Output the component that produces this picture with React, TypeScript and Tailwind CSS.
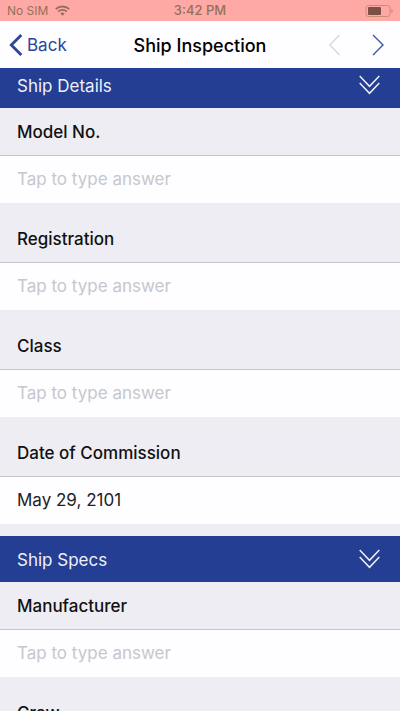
import { useState } from "react";

type Question = {
  id: string;
  label: string;
  value?: string;
};

type Section = {
  title: string;
  questions: Question[];
};

const sections: Section[] = [
  {
    title: "Ship Details",
    questions: [
      { id: "model", label: "Model No." },
      { id: "registration", label: "Registration" },
      { id: "class", label: "Class" },
      { id: "commission", label: "Date of Commission", value: "May 29, 2101" },
    ],
  },
  {
    title: "Ship Specs",
    questions: [
      { id: "manufacturer", label: "Manufacturer" },
      { id: "crew", label: "Crew" },
    ],
  },
];

function StatusBar() {
  return (
    <div className="grid h-[21px] shrink-0 grid-cols-[1fr_auto_1fr] items-center bg-[#ffa9a6] px-[7px] text-xs text-[#94705a]">
      <div className="flex items-center gap-[7px]">
        <span>No SIM</span>
        <svg width="15" height="11" viewBox="0 0 15 11" fill="none" aria-hidden="true">
          <path d="M.8 4.1a9.6 9.6 0 0 1 13.4 0" stroke="currentColor" strokeWidth="2" />
          <path d="M3.2 6.7a6.2 6.2 0 0 1 8.6 0" stroke="currentColor" strokeWidth="1.8" />
          <path d="M7.5 10.8 5.3 8.5a3.2 3.2 0 0 1 4.4 0z" fill="currentColor" />
        </svg>
      </div>
      <span className="text-[13px] font-medium">3:42 PM</span>
      <svg
        className="justify-self-end"
        width="28"
        height="12"
        viewBox="0 0 28 12"
        fill="none"
        aria-hidden="true"
      >
        <rect x="1" y=".5" width="24" height="11" rx="2.5" stroke="#c98f74" />
        <rect x="3" y="2" width="13" height="8" rx="1" fill="#7d5046" />
        <path d="M26.3 4v4c1-.4 1.4-1 1.4-2s-.4-1.6-1.4-2z" fill="#c98f74" />
      </svg>
    </div>
  );
}

function NavBar() {
  return (
    <header className="grid h-[47px] shrink-0 grid-cols-[1fr_auto_1fr] items-center bg-[#fefdff] px-2">
      <button type="button" className="flex items-center gap-1 text-[17px] text-[#2b459a]">
        <svg width="15" height="22" viewBox="0 0 15 22" fill="none" aria-hidden="true">
          <path d="M13.3 1 3.3 11l10 10" stroke="currentColor" strokeWidth="2.8" />
        </svg>
        <span className="pt-0.5">Back</span>
      </button>
      <h1 className="pt-0.5 text-lg font-medium text-black">Ship Inspection</h1>
      <div className="flex items-center justify-end gap-8 pr-2">
        <button type="button" aria-label="Previous" disabled className="text-[#d3d5dc]">
          <svg width="11" height="22" viewBox="0 0 11 22" fill="none" aria-hidden="true">
            <path d="M10.5 1 .8 11l9.7 10" stroke="currentColor" strokeWidth="1.2" />
          </svg>
        </button>
        <button type="button" aria-label="Next" className="text-[#3c55a5]">
          <svg width="12" height="22" viewBox="0 0 12 22" fill="none" aria-hidden="true">
            <path d="M1 1l10 10L1 21" stroke="currentColor" strokeWidth="1.4" />
          </svg>
        </button>
      </div>
    </header>
  );
}

function QuestionField({ id, label, value }: Question) {
  return (
    <div>
      <label
        htmlFor={id}
        className="flex h-12 items-center border-b border-[#c6c5cb] px-[17px] pt-0.5 text-[17px] font-medium text-[#111]"
      >
        {label}
      </label>
      <input
        id={id}
        type="text"
        defaultValue={value}
        placeholder="Tap to type answer"
        className="block h-[47px] w-full bg-[#fefdff] px-[17px] pb-0.5 text-[17px] text-[#222] outline-none placeholder:text-[#c6c7cc]"
      />
    </div>
  );
}

function QuestionSection({ title, questions }: Section) {
  const [open, setOpen] = useState(true);

  return (
    <section>
      <h2>
        <button
          type="button"
          aria-expanded={open}
          onClick={() => setOpen(!open)}
          className="flex h-[46px] w-full items-center justify-between bg-[#233e93] pr-5 pl-[17px] text-[17px] text-[#eff0f7]"
        >
          <span className="pt-1">{title}</span>
          <svg width="21" height="20" viewBox="0 0 21 20" fill="none" aria-hidden="true">
            <path
              d="M.7 1l9.8 10.3L20.3 1M.7 8l9.8 10.3L20.3 8"
              stroke="currentColor"
              strokeWidth="1.5"
            />
          </svg>
        </button>
      </h2>
      {open && (
        <div className="grid gap-3">
          {questions.map((question) => (
            <QuestionField key={question.id} {...question} />
          ))}
        </div>
      )}
    </section>
  );
}

export default function App() {
  return (
    <div className="flex h-screen flex-col bg-[#eeedf3] font-['Inter','Liberation_Sans',sans-serif]">
      <StatusBar />
      <NavBar />
      <main className="min-h-0 flex-1 overflow-y-auto [scrollbar-width:none]">
        <div className="-mt-1.5 grid gap-3">
          {sections.map((section) => (
            <QuestionSection key={section.title} {...section} />
          ))}
        </div>
      </main>
    </div>
  );
}
